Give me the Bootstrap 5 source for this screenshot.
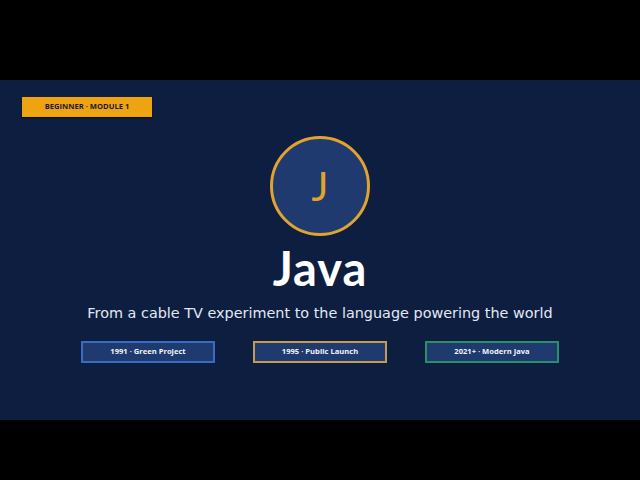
<!DOCTYPE html>
<html lang="en">
<head>
  <meta charset="UTF-8">
  <meta name="viewport" content="width=device-width, initial-scale=1">
  <title>Java</title>
  <link href="https://cdn.jsdelivr.net/npm/bootstrap@5.3.3/dist/css/bootstrap.min.css" rel="stylesheet">
  <style>
    html, body { height: 100%; background: #000; }
    body { font-family: "DejaVu Sans", sans-serif; overflow: hidden; }
    .slide { width: 640px; height: 340px; margin-top: 80px; background: #0d1e40; padding: 17px 22px 0; }
    .level {
      width: 130px; height: 20px; background: #eea313; color: #1a1a2e;
      font-family: "Open Sans", sans-serif; font-size: 7.6px; font-weight: 700;
      box-shadow: 0 1px 1px #0a0a14;
    }
    .logo {
      width: 100px; height: 100px; margin-top: 19px; background: #1f3a6e;
      border: 3px solid #e0a32f; border-radius: 50%;
      color: #e5a32b; font-family: "Lato", sans-serif; font-size: 40px; line-height: 1;
    }
    .title { height: 50px; margin: 7px 0 0; font-family: "Lato", sans-serif; font-size: 47px; font-weight: 700; letter-spacing: 1px; line-height: 50px; color: #fff; }
    .subtitle { margin: 8px 0 0; font-size: 14.4px; line-height: 24px; color: #e3e9f4; white-space: nowrap; }
    .stages { gap: 38px; margin-top: 16px; }
    .stage {
      width: 134px; height: 22px; background: #1f3a6e; color: #f2f5fa;
      border: 2px solid; font-family: "Open Sans", sans-serif; font-size: 7.6px; font-weight: 700;
    }
    .stage-blue { border-color: #3a6cc4; }
    .stage-gold { border-color: #c79a52; }
    .stage-green { border-color: #2b8f68; }
  </style>
</head>
<body>
  <div class="slide">
    <div class="level d-flex align-items-center justify-content-center">BEGINNER · MODULE 1</div>
    <div class="d-flex flex-column align-items-center">
      <div class="logo d-flex align-items-center justify-content-center">J</div>
      <h1 class="title">Java</h1>
      <p class="subtitle">From a cable TV experiment to the language powering the world</p>
      <div class="stages d-flex justify-content-center">
        <div class="stage stage-blue d-flex align-items-center justify-content-center">1991 · Green Project</div>
        <div class="stage stage-gold d-flex align-items-center justify-content-center">1995 · Public Launch</div>
        <div class="stage stage-green d-flex align-items-center justify-content-center">2021+ · Modern Java</div>
      </div>
    </div>
  </div>
  <script src="https://cdn.jsdelivr.net/npm/bootstrap@5.3.3/dist/js/bootstrap.bundle.min.js"></script>
</body>
</html>
